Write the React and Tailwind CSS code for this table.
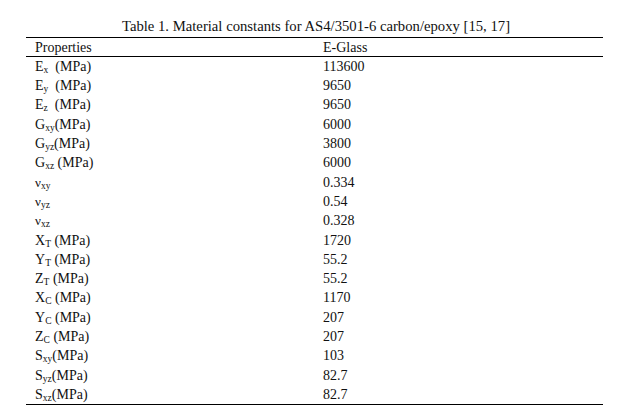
import React from "react";

const rows = [
  { sym: "E", sub: "x", unit: "  (MPa)", value: "113600" },
  { sym: "E", sub: "y", unit: "  (MPa)", value: "9650" },
  { sym: "E", sub: "z", unit: "  (MPa)", value: "9650" },
  { sym: "G", sub: "xy", unit: "(MPa)", value: "6000" },
  { sym: "G", sub: "yz", unit: "(MPa)", value: "3800" },
  { sym: "G", sub: "xz", unit: " (MPa)", value: "6000" },
  { sym: "ν", sub: "xy", unit: "", value: "0.334", nu: true },
  { sym: "ν", sub: "yz", unit: "", value: "0.54", nu: true },
  { sym: "ν", sub: "xz", unit: "", value: "0.328", nu: true },
  { sym: "X", sub: "T", unit: " (MPa)", value: "1720" },
  { sym: "Y", sub: "T", unit: " (MPa)", value: "55.2" },
  { sym: "Z", sub: "T", unit: " (MPa)", value: "55.2" },
  { sym: "X", sub: "C", unit: " (MPa)", value: "1170" },
  { sym: "Y", sub: "C", unit: " (MPa)", value: "207" },
  { sym: "Z", sub: "C", unit: " (MPa)", value: "207" },
  { sym: "S", sub: "xy", unit: "(MPa)", value: "103" },
  { sym: "S", sub: "yz", unit: "(MPa)", value: "82.7" },
  { sym: "S", sub: "xz", unit: "(MPa)", value: "82.7" },
];

const App = () => {
  return (
    <div
      className="w-[642px] h-[418px] bg-white text-[#111] overflow-hidden"
      style={{ fontFamily: '"Liberation Serif", "Times New Roman", serif' }}
    >
      <div className="ml-[26px] w-[577px] pt-[17px]">
        {/* Caption */}
        <div className="text-center text-[14.7px] leading-[19px] pl-[3px]">
          Table 1. Material constants for AS4/3501-6 carbon/epoxy [15, 17]
        </div>

        <table className="w-full border-collapse text-[14px] mt-[1px]">
          <thead>
            <tr className="border-t-[1.5px] border-b-[1.5px] border-black h-[19px]">
              <th className="w-[289px] pl-[9px] text-left font-normal leading-[17px]">
                Properties
              </th>
              <th className="pl-[8px] text-left font-normal leading-[17px]">
                E-Glass
              </th>
            </tr>
          </thead>
          <tbody className="border-b-[1.5px] border-black">
            {rows.map((row, i) => (
              <tr key={i} className="h-[19.3px]">
                <td className="pl-[9px] leading-[19px] whitespace-pre">
                  {row.nu ? (
                    <span className="text-[13px] leading-none">{row.sym}</span>
                  ) : (
                    row.sym
                  )}
                  <span className="relative top-[2px] text-[9.5px] leading-none">
                    {row.sub}
                  </span>
                  {row.unit}
                </td>
                <td className="pl-[8px] leading-[19px]">{row.value}</td>
              </tr>
            ))}
          </tbody>
        </table>
      </div>
    </div>
  );
};

export default App;
